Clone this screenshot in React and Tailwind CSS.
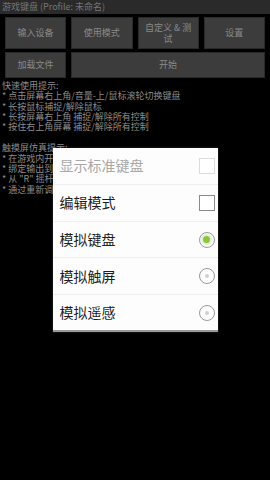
const font = { fontFamily: '"Noto Sans CJK SC", "Noto Sans", sans-serif' };

const items = [
  { label: "显示标准键盘", type: "check", disabled: true },
  { label: "编辑模式", type: "check" },
  { label: "模拟键盘", type: "radio", checked: true },
  { label: "模拟触屏", type: "radio" },
  { label: "模拟遥感", type: "radio" },
];

function Control({ item }) {
  if (item.type === "check") {
    return (
      <div
        className={`w-[16px] h-[16px] border ${
          item.disabled ? "border-[#dcdcdc]" : "border-[#8a8a8a]"
        } bg-white`}
      ></div>
    );
  }
  return (
    <div className="w-[16px] h-[16px] rounded-full border border-[#9a9a9a] flex items-center justify-center">
      {item.checked ? (
        <div className="w-[7px] h-[7px] rounded-full bg-[#8cc63f] ring-2 ring-[#e4f1d4]"></div>
      ) : (
        <div className="w-[4px] h-[4px] rounded-full bg-[#d0d0d0]"></div>
      )}
    </div>
  );
}

export default function App() {
  return (
    <div className="relative w-[270px] h-[480px] bg-black overflow-hidden" style={font}>
      {/* Title */}
      <div className="h-[14px] bg-[#2a2a2a] text-[#767676] text-[9px] leading-[14px] pl-[2px]">
        游戏键盘 (Profile: 未命名)
      </div>

      {/* Buttons */}
      <div className="grid grid-cols-4 gap-x-[5px] gap-y-[3px] px-[5px] pt-[3px]">
        {["输入设备", "使用模式"].map((t) => (
          <div
            key={t}
            className="h-[32px] bg-[#3c3c3c] border border-[#2a2a2a] flex items-center justify-center text-[9px] text-[#8a8a8a]"
          >
            {t}
          </div>
        ))}
        <div className="h-[32px] bg-[#3c3c3c] border border-[#2a2a2a] flex items-center justify-center text-center text-[9px] leading-[11px] text-[#8a8a8a]">
          自定义 &amp; 测<br />试
        </div>
        <div className="h-[32px] bg-[#3c3c3c] border border-[#2a2a2a] flex items-center justify-center text-[9px] text-[#8a8a8a]">
          设置
        </div>
        <div className="h-[26px] bg-[#3c3c3c] border border-[#2a2a2a] flex items-center justify-center text-[9px] text-[#8a8a8a]">
          加载文件
        </div>
        <div className="col-span-3 h-[26px] bg-[#3c3c3c] border border-[#2a2a2a] flex items-center justify-center text-[9px] text-[#8a8a8a]">
          开始
        </div>
      </div>

      {/* Hints */}
      <div className="px-[2px] pt-[3px] text-[9px] leading-[10.3px] text-[#8c8c8c]">
        <p>快速使用提示:</p>
        <p>* 点击屏幕右上角/音量-上/鼠标滚轮切换键盘</p>
        <p>* 长按鼠标捕捉/解除鼠标</p>
        <p>* 长按屏幕右上角 捕捉/解除所有控制</p>
        <p>* 按住右上角屏幕 捕捉/解除所有控制</p>
        <p className="mt-[11px]">触摸屏仿真提示:</p>
        <p>* 在游戏内开启触摸屏仿真模式</p>
        <p>* 绑定输出到游戏按键</p>
        <p>* 从 "R" 摇杆拖动来模拟触摸</p>
        <p>* 通过重新调整位置来校准</p>
      </div>

      {/* Dialog */}
      <div className="absolute inset-0 flex items-center justify-center">
        <div className="w-[165px] bg-[#fdfdfd] border-b-2 border-[#9a9a9a] shadow-[0_0_2px_rgba(255,255,255,0.2)]">
          {items.map((item, i) => (
            <div
              key={item.label}
              className={`h-[36.6px] flex items-center justify-between pl-[7px] pr-[3px] ${
                i > 0 ? "border-t border-[#efefef]" : ""
              }`}
            >
              <span
                className={`text-[14px] ${
                  item.disabled ? "text-[#a8a8a8]" : "text-[#1e1e1e]"
                }`}
              >
                {item.label}
              </span>
              <Control item={item} />
            </div>
          ))}
        </div>
      </div>
    </div>
  );
}
